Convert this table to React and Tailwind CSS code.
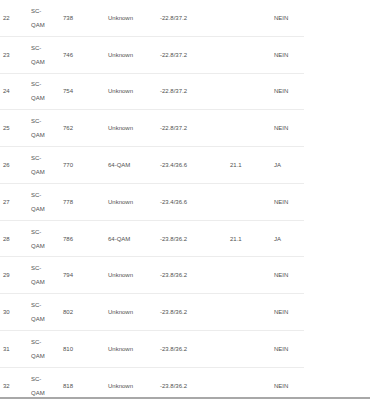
import React from "react";

const rows = [
  ["22", "738", "Unknown", "-22.8/37.2", "", "NEIN"],
  ["23", "746", "Unknown", "-22.8/37.2", "", "NEIN"],
  ["24", "754", "Unknown", "-22.8/37.2", "", "NEIN"],
  ["25", "762", "Unknown", "-22.8/37.2", "", "NEIN"],
  ["26", "770", "64-QAM", "-23.4/36.6", "21.1", "JA"],
  ["27", "778", "Unknown", "-23.4/36.6", "", "NEIN"],
  ["28", "786", "64-QAM", "-23.8/36.2", "21.1", "JA"],
  ["29", "794", "Unknown", "-23.8/36.2", "", "NEIN"],
  ["30", "802", "Unknown", "-23.8/36.2", "", "NEIN"],
  ["31", "810", "Unknown", "-23.8/36.2", "", "NEIN"],
  ["32", "818", "Unknown", "-23.8/36.2", "", "NEIN"],
];

export default function App() {
  return (
    <div
      className="relative w-[370px] h-[400px] overflow-hidden bg-white text-[#505050] text-[6px]"
      style={{ fontFamily: '"Liberation Sans", Arial, sans-serif' }}
    >
      <div className="w-[304px]">
        {rows.map((r) => (
          <div
            key={r[0]}
            className="grid grid-cols-[28px_32px_45px_52px_70px_44px_33px] items-center border-b border-[#ececec] py-[3.9px] leading-[14px]"
          >
            <div className="pl-[3px]">{r[0]}</div>
            <div className="pl-[3px]">
              <span className="block">SC-</span>
              <span className="block">QAM</span>
            </div>
            <div className="pl-[3px]">{r[1]}</div>
            <div className="pl-[3px]">{r[2]}</div>
            <div className="pl-[3px]">{r[3]}</div>
            <div className="pl-[3px]">{r[4]}</div>
            <div className="pl-[3px]">{r[5]}</div>
          </div>
        ))}
      </div>
      <div className="absolute left-0 right-0 bottom-[1px] h-[2px] bg-[#a8a8a8]" />
    </div>
  );
}
